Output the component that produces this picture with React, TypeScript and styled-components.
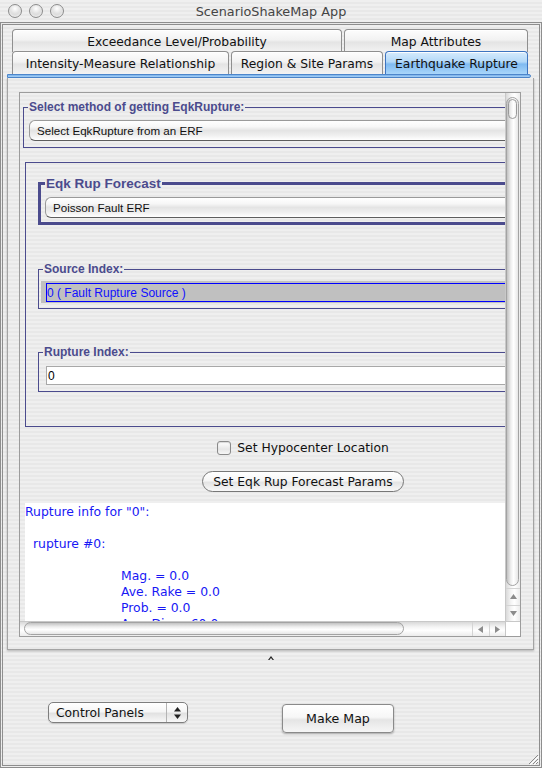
import React from "react";
import styled, { createGlobalStyle, css } from "styled-components";

const UI = `"DejaVu Sans", "Noto Sans", sans-serif`;
const HELV = `"Liberation Sans", Arial, sans-serif`;
const TITLE_BLUE = "#4b4b8d";

const GlobalStyle = createGlobalStyle`
  html, body { margin: 0; padding: 0; background: #fff; }
  body { width: 542px; height: 768px; overflow: hidden; font-family: ${UI}; }
  * { box-sizing: border-box; }
`;

const pinstripe = css`
  background: repeating-linear-gradient(180deg, #efefef 0px, #efefef 2px, #e8e8e8 2px, #e8e8e8 4px);
`;

const Window = styled.div`
  width: 542px;
  height: 768px;
  display: flex;
  flex-direction: column;
  overflow: hidden;
`;

const TitleBar = styled.div`
  height: 22px;
  flex: none;
  display: grid;
  grid-template-columns: 1fr auto 1fr;
  align-items: center;
  ${pinstripe};
`;

const Lights = styled.div`
  display: flex;
  gap: 7px;
  padding-left: 8px;
`;

const Light = styled.span`
  width: 14px;
  height: 14px;
  border-radius: 50%;
  border: 1px solid #8c8c8c;
  background: radial-gradient(circle at 50% 30%, #ffffff 0%, #e2e2e2 45%, #c4c4c4 100%);
  box-shadow: inset 0 -1px 2px rgba(255, 255, 255, 0.8);
`;

const Title = styled.div`
  font-family: ${UI};
  font-size: 12.8px;
  color: #444;
  padding-top: 1px;
`;

const Frame = styled.div`
  flex: 1;
  position: relative;
  border: 3px double #8e8e8e;
  ${pinstripe};
  display: flex;
  flex-direction: column;
  padding: 4px 0 0 4px;
`;

const TabbedPane = styled.div`
  width: 527px;
  display: flex;
  flex-direction: column;
`;

const TabRow = styled.div<{ $overlap?: boolean }>`
  display: flex;
  gap: 2px;
  padding-left: 5px;
  height: 23px;
  margin-top: ${(p) => (p.$overlap ? "-1px" : "0")};
  position: relative;
`;

const Tab = styled.div<{ $w: number; $active?: boolean }>`
  width: ${(p) => p.$w}px;
  height: 100%;
  border: 1px solid ${(p) => (p.$active ? "#3d74c0" : "#8f8f8f")};
  border-bottom: none;
  border-radius: 4px 4px 0 0;
  display: flex;
  align-items: center;
  justify-content: center;
  font-family: ${UI};
  font-size: 12.3px;
  color: #111;
  padding-top: 1px;
  background: ${(p) =>
    p.$active
      ? "linear-gradient(#d6ebfd 0%, #b2d8f8 45%, #7fbaf1 55%, #a9d6fa 100%)"
      : "linear-gradient(#fdfdfd 0%, #f2f2f2 45%, #e4e4e4 55%, #f3f3f3 100%)"};
  box-shadow: inset 0 1px 0 rgba(255, 255, 255, 0.9);
`;

const TabLine = styled.div`
  height: 4px;
  margin-right: 3px;
  border: 1px solid #4d86cb;
  border-radius: 0 2px 2px 0;
  background: linear-gradient(#78b0ea, #a9d2f7);
`;

const TabBody = styled.div`
  height: 572px;
  border: 1px solid #a4a4a4;
  border-top: none;
  box-shadow: 0 1px 2px rgba(0, 0, 0, 0.25);
  padding: 14px 0 0 11px;
`;

const ScrollPane = styled.div`
  width: 502px;
  height: 545px;
  border: 1px solid #9c9c9c;
  display: grid;
  grid-template-columns: 485px 15px;
  grid-template-rows: 528px 15px;
`;

const Viewport = styled.div`
  overflow: hidden;
`;

const Content = styled.div`
  width: 566px;
  padding-top: 6px;
  display: flex;
  flex-direction: column;
`;

const Group = styled.fieldset<{ $thick?: boolean; $ml: number; $mt: number }>`
  margin: ${(p) => p.$mt}px 0 0 ${(p) => p.$ml}px;
  padding: 0;
  min-width: 0;
  border: ${(p) => (p.$thick ? 3 : 1)}px solid ${TITLE_BLUE};
  display: flex;
  flex-direction: column;
`;

const Legend = styled.legend<{ $big?: boolean }>`
  margin-left: 4px;
  padding: 0 1px;
  font-family: ${HELV};
  font-weight: bold;
  font-size: ${(p) => (p.$big ? "13.5px" : "12px")};
  line-height: ${(p) => (p.$big ? "17px" : "16px")};
  color: ${TITLE_BLUE};
`;

const Combo = styled.div<{ $ml: number; $mt: number; $mb: number }>`
  margin: ${(p) => p.$mt}px 0 ${(p) => p.$mb}px ${(p) => p.$ml}px;
  height: 21px;
  border: 1px solid #9a9a9a;
  border-bottom-color: #5e5e5e;
  border-right: none;
  border-radius: 6px 0 0 6px;
  background: linear-gradient(#ffffff 0%, #f7f7f7 30%, #e4e4e4 50%, #efefef 75%, #ffffff 100%);
  display: flex;
  align-items: center;
  padding-left: 7px;
  font-family: ${HELV};
  font-size: 11.6px;
  color: #111;
`;

const OuterPanel = styled.div`
  margin: 14px 0 0 5px;
  border: 1px solid ${TITLE_BLUE};
  padding: 12px 0 34px 12px;
  display: flex;
  flex-direction: column;
`;

const ListBox = styled.div`
  margin: 4px 0 5px 2px;
  height: 22px;
  background: #c0c0c0;
  padding: 2px 0 0 5px;
`;

const ListItem = styled.div`
  height: 19px;
  border: 1px solid #0000ff;
  border-right: none;
  display: flex;
  align-items: center;
  font-family: ${HELV};
  font-size: 12px;
  color: #1010ff;
`;

const TextField = styled.div`
  margin: 6px 0 6px 7px;
  height: 19px;
  background: #fff;
  border: 1px solid #a8a8a8;
  border-right: none;
  display: flex;
  align-items: center;
  padding-left: 1px;
  font-family: ${HELV};
  font-size: 12px;
  color: #000;
`;

const CheckRow = styled.label`
  margin-top: 13px;
  height: 16px;
  display: flex;
  align-items: center;
  justify-content: center;
  gap: 6px;
  font-family: ${UI};
  font-size: 12.3px;
  color: #111;
`;

const CheckBox = styled.span`
  width: 14px;
  height: 14px;
  border: 1px solid #8a8a8a;
  border-radius: 3px;
  background: linear-gradient(#ffffff, #e6e6e6 60%, #f6f6f6);
  box-shadow: inset 0 1px 1px rgba(0, 0, 0, 0.15);
`;

const PillButton = styled.div`
  align-self: center;
  margin-top: 15px;
  width: 202px;
  height: 21px;
  border: 1px solid #777;
  border-radius: 11px;
  background: linear-gradient(#ffffff 0%, #f6f6f6 45%, #e4e4e4 55%, #f8f8f8 100%);
  display: flex;
  align-items: center;
  justify-content: center;
  font-family: ${UI};
  font-size: 12.3px;
  color: #111;
`;

const InfoArea = styled.div`
  margin: 11px 0 0 5px;
  height: 220px;
  background: #fff;
  padding-top: 1px;
`;

const InfoLine = styled.div<{ $indent: number }>`
  height: 16px;
  line-height: 16px;
  padding-left: ${(p) => p.$indent}px;
  font-family: ${UI};
  font-size: 12.4px;
  color: #1818f5;
  white-space: pre;
`;

const VScroll = styled.div`
  display: flex;
  flex-direction: column;
  background: linear-gradient(90deg, #d9d9d9 0%, #f4f4f4 35%, #ffffff 60%, #ececec 100%);
  border-left: 1px solid #c8c8c8;
`;

const VThumb = styled.div`
  flex: 1;
  margin: 4px 1px 2px 0;
  border: 1px solid #a3a3a3;
  border-radius: 7px;
  background: linear-gradient(90deg, #c2c2c2 0%, #eeeeee 35%, #ffffff 60%, #e6e6e6 100%);
  position: relative;
`;

const ThumbCap = styled.div`
  position: absolute;
  left: 1px;
  right: 1px;
  top: 1px;
  height: 20px;
  border: 1px solid #9a9a9a;
  border-radius: 6px;
`;

const ArrowBox = styled.div<{ $dir: "v" | "h" }>`
  flex: none;
  display: flex;
  flex-direction: ${(p) => (p.$dir === "v" ? "column" : "row")};
  ${(p) => (p.$dir === "v" ? "height: 33px;" : "width: 33px;")}
`;

const Arrow = styled.div<{ $dir: "v" | "h" }>`
  flex: 1;
  display: flex;
  align-items: center;
  justify-content: center;
  ${(p) => (p.$dir === "v" ? "border-top: 1px solid #d4d4d4;" : "border-left: 1px solid #d4d4d4;")}
`;

const HScroll = styled.div`
  display: flex;
  background: linear-gradient(180deg, #d9d9d9 0%, #f4f4f4 35%, #ffffff 60%, #ececec 100%);
  border-top: 1px solid #c8c8c8;
`;

const HTrack = styled.div`
  flex: 1;
  padding: 0 0 0 4px;
  display: flex;
`;

const HThumb = styled.div`
  width: 380px;
  margin: 0 0 1px 0;
  border: 1px solid #a3a3a3;
  border-radius: 7px;
  background: linear-gradient(180deg, #c2c2c2 0%, #eeeeee 35%, #ffffff 60%, #e6e6e6 100%);
`;

const Corner = styled.div`
  background: #fff;
  border-top: 1px solid #c8c8c8;
  border-left: 1px solid #c8c8c8;
`;

const DividerRow = styled.div`
  height: 16px;
  display: flex;
  align-items: center;
  justify-content: center;
  padding-right: 4px;
`;

const BottomBar = styled.div`
  margin-top: 36px;
  padding-left: 41px;
  display: flex;
  align-items: flex-start;
`;

const PopupButton = styled.div`
  width: 140px;
  height: 21px;
  border: 1px solid #7e7e7e;
  border-radius: 5px;
  background: linear-gradient(#ffffff 0%, #f6f6f6 45%, #e2e2e2 55%, #f8f8f8 100%);
  display: flex;
  font-family: ${UI};
  font-size: 12.3px;
  color: #111;
  box-shadow: 0 1px 1px rgba(0, 0, 0, 0.15);
`;

const PopupLabel = styled.div`
  flex: 1;
  display: flex;
  align-items: center;
  padding-left: 7px;
`;

const PopupArrows = styled.div`
  width: 21px;
  border-left: 1px solid #b4b4b4;
  display: flex;
  align-items: center;
  justify-content: center;
`;

const PushButton = styled.div`
  margin: 2px 0 0 94px;
  width: 112px;
  height: 29px;
  border: 1px solid #8a8a8a;
  border-radius: 4px;
  background: linear-gradient(#ffffff 0%, #f7f7f7 45%, #e5e5e5 55%, #f6f6f6 100%);
  box-shadow: 0 1px 2px rgba(0, 0, 0, 0.3);
  display: flex;
  align-items: center;
  justify-content: center;
  font-family: ${UI};
  font-size: 12.6px;
  color: #111;
`;

const Grip = styled.svg`
  position: absolute;
  right: 0;
  bottom: 0;
`;

const TriUp = () => (
  <svg width="7" height="5" viewBox="0 0 7 5">
    <path d="M3.5 0 L7 5 L0 5 Z" fill="#8c8c8c" />
  </svg>
);
const TriDown = () => (
  <svg width="7" height="5" viewBox="0 0 7 5">
    <path d="M0 0 L7 0 L3.5 5 Z" fill="#8c8c8c" />
  </svg>
);
const TriLeft = () => (
  <svg width="5" height="7" viewBox="0 0 5 7">
    <path d="M5 0 L5 7 L0 3.5 Z" fill="#8c8c8c" />
  </svg>
);
const TriRight = () => (
  <svg width="5" height="7" viewBox="0 0 5 7">
    <path d="M0 0 L5 3.5 L0 7 Z" fill="#8c8c8c" />
  </svg>
);

const infoLines: [number, string][] = [
  [0, 'Rupture info for "0":'],
  [0, ""],
  [8, "rupture #0:"],
  [0, ""],
  [96, "Mag. = 0.0"],
  [96, "Ave. Rake = 0.0"],
  [96, "Prob. = 0.0"],
  [96, "Ave. Dip = 60.0"],
];

export default function App() {
  return (
    <>
      <GlobalStyle />
      <Window>
        <TitleBar>
          <Lights>
            <Light />
            <Light />
            <Light />
          </Lights>
          <Title>ScenarioShakeMap App</Title>
          <span />
        </TitleBar>
        <Frame>
          <TabbedPane>
            <TabRow>
              <Tab $w={330}>Exceedance Level/Probability</Tab>
              <Tab $w={184}>Map Attributes</Tab>
            </TabRow>
            <TabRow $overlap>
              <Tab $w={217}>Intensity-Measure Relationship</Tab>
              <Tab $w={152}>Region &amp; Site Params</Tab>
              <Tab $w={143} $active>
                Earthquake Rupture
              </Tab>
            </TabRow>
            <TabLine />
            <TabBody>
              <ScrollPane>
                <Viewport>
                  <Content>
                    <Group $ml={3} $mt={0}>
                      <Legend>Select method of getting EqkRupture:</Legend>
                      <Combo $ml={5} $mt={5} $mb={6}>
                        Select EqkRupture from an ERF
                      </Combo>
                    </Group>
                    <OuterPanel>
                      <Group $thick $ml={0} $mt={0}>
                        <Legend $big>Eqk Rup Forecast</Legend>
                        <Combo $ml={4} $mt={5} $mb={4}>
                          Poisson Fault ERF
                        </Combo>
                      </Group>
                      <Group $ml={0} $mt={36}>
                        <Legend>Source Index:</Legend>
                        <ListBox>
                          <ListItem>0 ( Fault Rupture Source )</ListItem>
                        </ListBox>
                      </Group>
                      <Group $ml={0} $mt={35}>
                        <Legend>Rupture Index:</Legend>
                        <TextField>0</TextField>
                      </Group>
                    </OuterPanel>
                    <CheckRow>
                      <CheckBox />
                      Set Hypocenter Location
                    </CheckRow>
                    <PillButton>Set Eqk Rup Forecast Params</PillButton>
                    <InfoArea>
                      {infoLines.map(([indent, text], i) => (
                        <InfoLine key={i} $indent={indent}>
                          {text}
                        </InfoLine>
                      ))}
                    </InfoArea>
                  </Content>
                </Viewport>
                <VScroll>
                  <VThumb>
                    <ThumbCap />
                  </VThumb>
                  <ArrowBox $dir="v">
                    <Arrow $dir="v">
                      <TriUp />
                    </Arrow>
                    <Arrow $dir="v">
                      <TriDown />
                    </Arrow>
                  </ArrowBox>
                </VScroll>
                <HScroll>
                  <HTrack>
                    <HThumb />
                  </HTrack>
                  <ArrowBox $dir="h">
                    <Arrow $dir="h">
                      <TriLeft />
                    </Arrow>
                    <Arrow $dir="h">
                      <TriRight />
                    </Arrow>
                  </ArrowBox>
                </HScroll>
                <Corner />
              </ScrollPane>
            </TabBody>
          </TabbedPane>
          <DividerRow>
            <svg width="6" height="4" viewBox="0 0 6 4">
              <path d="M0 4 L3 0 L6 4 L4.6 4 L3 2 L1.4 4 Z" fill="#222" />
            </svg>
          </DividerRow>
          <BottomBar>
            <PopupButton>
              <PopupLabel>Control Panels</PopupLabel>
              <PopupArrows>
                <svg width="7" height="12" viewBox="0 0 7 12">
                  <path d="M3.5 0 L7 4.5 L0 4.5 Z" fill="#222" />
                  <path d="M0 7.5 L7 7.5 L3.5 12 Z" fill="#222" />
                </svg>
              </PopupArrows>
            </PopupButton>
            <PushButton>Make Map</PushButton>
          </BottomBar>
          <Grip width="13" height="13" viewBox="0 0 13 13">
            <path d="M12 3 L3 12 M12 7 L7 12 M12 10 L10 12" stroke="#8a8a8a" strokeWidth="1" />
            <path d="M13 4 L4 13 M13 8 L8 13" stroke="#ffffff" strokeWidth="1" />
          </Grip>
        </Frame>
      </Window>
    </>
  );
}
